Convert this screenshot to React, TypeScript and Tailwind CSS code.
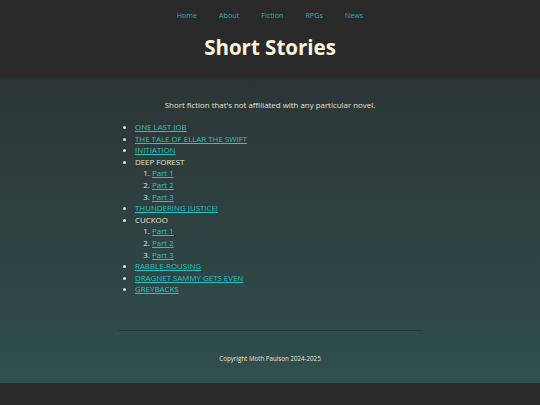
import React from 'react';

const navLinks = ['Home', 'About', 'Fiction', 'RPGs', 'News'];

type Story = { title: string; link?: boolean; parts?: number };

const stories: Story[] = [
  { title: 'ONE LAST JOB', link: true },
  { title: 'THE TALE OF ELLAR THE SWIFT', link: true },
  { title: 'INITIATION', link: true },
  { title: 'DEEP FOREST', parts: 3 },
  { title: 'THUNDERING JUSTICE!', link: true },
  { title: 'CUCKOO', parts: 3 },
  { title: 'RABBLE-ROUSING', link: true },
  { title: 'DRAGNET SAMMY GETS EVEN', link: true },
  { title: 'GREYBACKS', link: true },
];

const linkCls = 'text-[#2cc2c2] underline underline-offset-1';

export default function App() {
  return (
    <div className="min-h-[405px] flex flex-col bg-[#2a2a2a] font-['Open_Sans','Noto_Sans',sans-serif]">
      {/* Header with nav and page title */}
      <header className="h-[78px] bg-[#2a2a2a] flex flex-col items-center">
        <nav className="flex gap-[22px] pt-[10px] text-[7.2px] leading-[10px] text-[#25b3b3]">
          {navLinks.map(n => (
            <a key={n} href="#">{n}</a>
          ))}
        </nav>
        <h1 className="mt-[12px] text-[20.5px] leading-[30px] font-bold text-[#fbf3dc]">Short Stories</h1>
      </header>

      <main className="h-[305px] bg-gradient-to-b from-[#2c3535] to-[#2f4f4f] flex flex-col items-center">
        <div className="w-[304px] flex flex-col">
          <p className="mt-[21px] text-center text-[7.9px] leading-[12px] text-[#e6e1d2]">
            Short fiction that's not affiliated with any particular novel.
          </p>
          <ul className="mt-[11px] pl-[17px] list-disc text-[7.9px] leading-[11.6px] text-[#e6e1d2] marker:text-[#e6e1d2]">
            {stories.map(s => (
              <li key={s.title}>
                {s.link ? <a href="#" className={linkCls}>{s.title}</a> : <span>{s.title}</span>}
                {s.parts && (
                  <ol className="list-decimal pl-[17px]">
                    {Array.from({ length: s.parts }, (_, i) => (
                      <li key={i}>
                        <a href="#" className={linkCls}>Part {i + 1}</a>
                      </li>
                    ))}
                  </ol>
                )}
              </li>
            ))}
          </ul>
          <hr className="mt-[34px] border-t border-[#243a3a]" />
          <p className="mt-[23px] text-center text-[6.2px] leading-[10px] text-[#e6e1d2]">Copyright Moth Paulson 2024-2025</p>
        </div>
      </main>

      <footer className="h-[22px] bg-[#2a2a2a]" />
    </div>
  );
}
